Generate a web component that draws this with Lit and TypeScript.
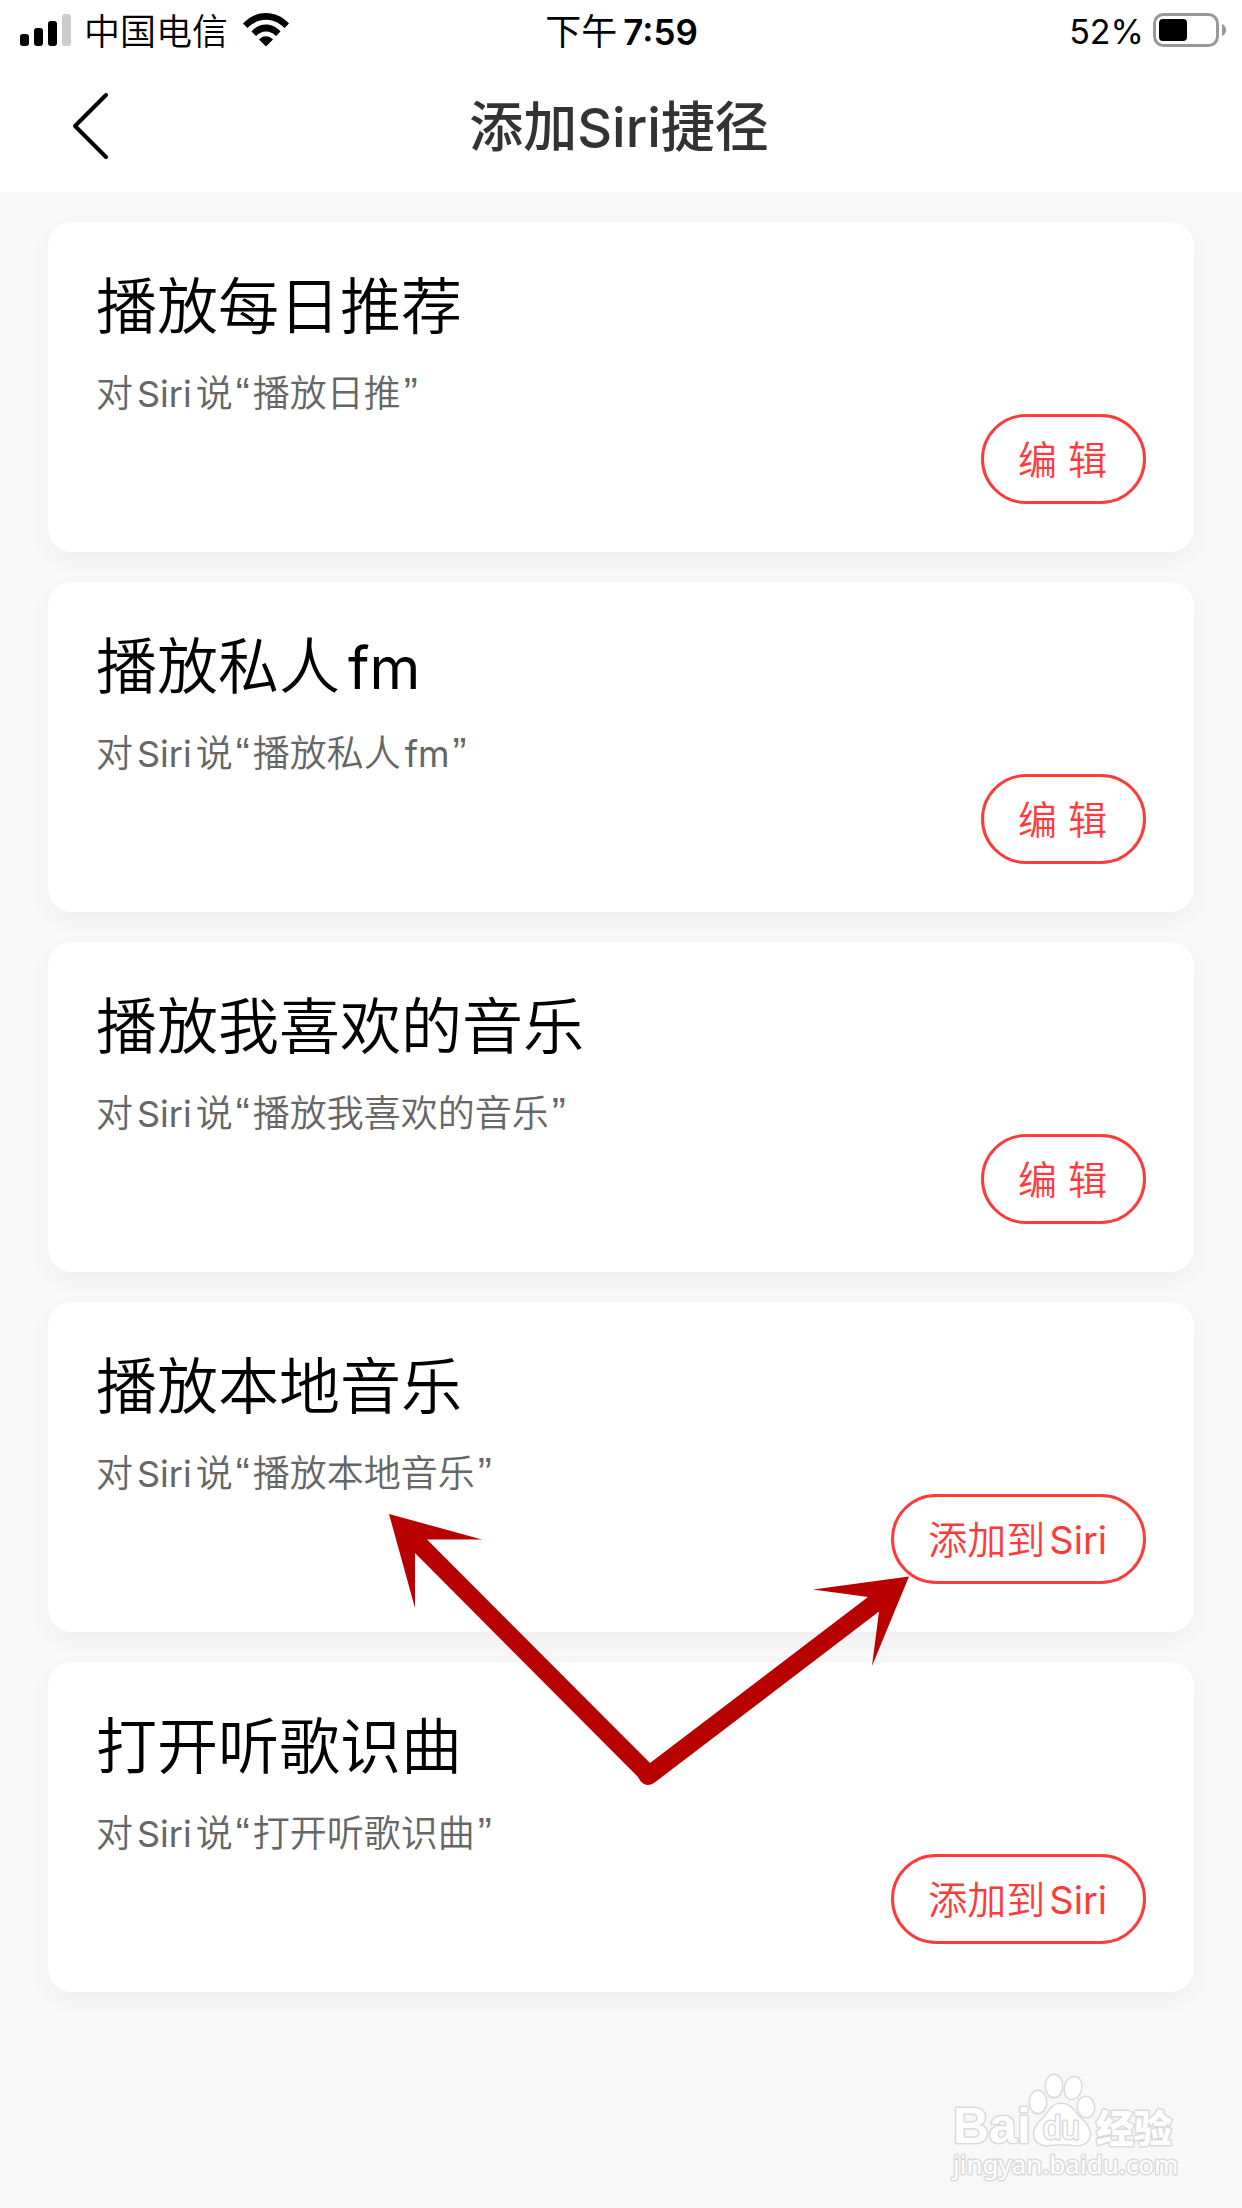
import { LitElement, html, css, svg } from "lit";
import { customElement, property } from "lit/decorators.js";
import { classMap } from "lit/directives/class-map.js";

interface Shortcut {
  title: string;
  phrase: string;
  added: boolean;
}

const SHORTCUTS: Shortcut[] = [
  { title: "播放每日推荐", phrase: "播放日推", added: true },
  { title: "播放私人fm", phrase: "播放私人fm", added: true },
  { title: "播放我喜欢的音乐", phrase: "播放我喜欢的音乐", added: true },
  { title: "播放本地音乐", phrase: "播放本地音乐", added: false },
  { title: "打开听歌识曲", phrase: "打开听歌识曲", added: false },
];

/**
 * Wraps Latin runs so that they get breathing room beside Chinese text,
 * and quotation marks so that they use a face with curly marks.
 */
const spaced = (text: string) => {
  const parts = text.split(/([A-Za-z]+|[“”])/).filter(Boolean);
  return parts.map((part, i) => {
    if (/^[“”]$/.test(part)) return html`<span class="quote">${part}</span>`;
    if (!/^[A-Za-z]/.test(part)) return part;
    const next = parts[i + 1];
    const open = next !== undefined && !/^[“”]$/.test(next);
    return html`<span class=${classMap({ latin: true, open })}>${part}</span>`;
  });
};

@customElement("status-bar")
export class StatusBar extends LitElement {
  static styles = css`
    :host {
      display: grid;
      grid-template-columns: 1fr auto 1fr;
      align-items: center;
      height: 60px;
      padding: 0 15px 0 20px;
      font-size: 36px;
      line-height: 56px;
      color: #000;
    }
    .group {
      display: flex;
      align-items: center;
    }
    span {
      padding-top: 3px;
    }
    .carrier {
      margin: 0 15px 0 12px;
      font-weight: 350;
    }
    .time {
      display: flex;
      gap: 6px;
      padding-right: 4px;
    }
    .clock {
      font-size: 35px;
      font-weight: 600;
    }
    .power {
      justify-content: flex-end;
      gap: 9px;
    }
    .level {
      font-size: 34px;
    }
    svg {
      display: block;
    }
  `;

  render() {
    return html`
      <div class="group">
        <svg width="52" height="32" viewBox="0 0 52 32" aria-hidden="true">
          <rect x="0" y="20" width="9" height="12" rx="3" />
          <rect x="14" y="14" width="9" height="18" rx="3" />
          <rect x="28" y="7" width="9" height="25" rx="3" />
          <rect x="42" y="0" width="9" height="32" rx="3" fill="#ccc" />
        </svg>
        <span class="carrier">中国电信</span>
        <svg width="46" height="34" viewBox="0 0 46 34" aria-hidden="true">
          <path d="M0 10.5C12.500 -3.500 33.500 -3.500 46 10.500L41.500 15C31 4 15 4 4.500 15Z" />
          <path d="M8.500 18.500C16.500 9.300 29.500 9.300 37.500 18.500L33 23C27.500 17 18.500 17 13 23Z" />
          <path d="M16 26.500C20 22 26 22 30 26.500L23 33.500Z" />
        </svg>
      </div>
      <div class="time"><span>下午</span><span class="clock">7:59</span></div>
      <div class="group power">
        <span class="level">52%</span>
        <svg width="74" height="34" viewBox="0 0 74 34" aria-hidden="true">
          <rect x="1.500" y="1.500" width="63" height="31" rx="9" fill="none" stroke="#999" stroke-width="3" />
          <rect x="6" y="6" width="28" height="22" rx="4" />
          <path d="M69 11C74.500 13 74.500 21 69 23Z" fill="#999" />
        </svg>
      </div>
    `;
  }
}

@customElement("shortcut-card")
export class ShortcutCard extends LitElement {
  @property({ attribute: false }) item!: Shortcut;

  static styles = css`
    :host {
      display: flex;
      flex-direction: column;
      padding: 50px 48px 48px;
      border-radius: 24px;
      background: #fff;
      box-shadow: 0 9px 24px rgba(0, 0, 0, 0.04);
      font-weight: 350;
    }
    .title {
      margin: 0;
      font-size: 61px;
      line-height: 70px;
      font-weight: 350;
      color: #000;
    }
    .hint {
      margin: 32px 0 0;
      font-size: 37px;
      line-height: 40px;
      color: #666;
    }
    .latin,
    .quote {
      line-height: 0;
    }
    .latin {
      margin-left: 4px;
      font-weight: 400;
    }
    .open {
      margin-right: 4px;
    }
    .title .latin {
      margin-left: 8px;
      font-size: 58px;
    }
    .hint .latin {
      font-size: 36px;
    }
    .quote {
      margin: 0 3px;
      font-family: "Liberation Sans", sans-serif;
      font-size: 42px;
    }
    .action {
      align-self: flex-end;
      height: 90px;
      padding: 2px 36px 0 34px;
      border: 3px solid #ff3a3a;
      border-radius: 45px;
      background: transparent;
      color: #ff3a3a;
      font: inherit;
      font-size: 39px;
      line-height: 82px;
      cursor: pointer;
    }
    .action .latin {
      font-size: 38px;
    }
  `;

  render() {
    const { title, phrase, added } = this.item;
    return html`
      <h2 class="title">${spaced(title)}</h2>
      <p class="hint">${spaced(`对Siri说“${phrase}”`)}</p>
      <button class="action" type="button">${added ? "编 辑" : spaced("添加到Siri")}</button>
    `;
  }
}

@customElement("app-root")
export class AppRoot extends LitElement {
  static styles = css`
    :host {
      display: flex;
      flex-direction: column;
      position: relative;
      box-sizing: border-box;
      min-height: 100vh;
      background: #f8f8f8;
      font-family: Inter, "Noto Sans CJK SC", sans-serif;
    }
    .top {
      background: #fff;
    }
    .nav {
      display: grid;
      grid-template-columns: 1fr auto 1fr;
      align-items: center;
      height: 132px;
      padding: 0 48px;
    }
    .back {
      justify-self: start;
      display: flex;
      padding: 16px 24px;
      border: 0;
      background: none;
      cursor: pointer;
    }
    .heading {
      margin: 0;
      padding: 4px 4px 0 0;
      font-size: 54px;
      line-height: 72px;
      font-weight: 500;
      color: #333;
    }
    .list {
      display: flex;
      flex-direction: column;
      gap: 30px;
      margin: 0;
      padding: 30px 48px;
      list-style: none;
    }
    .arrows {
      position: absolute;
      left: 389px;
      top: 1514px;
      pointer-events: none;
    }
    .watermark {
      align-self: flex-end;
      margin-top: auto;
      padding: 0 58px 15px 0;
    }
    .watermark svg {
      display: block;
    }
    .mark {
      fill: #fff;
      stroke: #dadada;
      stroke-width: 3px;
      stroke-linejoin: round;
      paint-order: stroke;
    }
    .latin-mark {
      font: 700 50px "Liberation Sans", sans-serif;
    }
    .du-mark {
      font: 400 33px "Liberation Sans", sans-serif;
    }
    .cjk-mark {
      font: 900 38px "Noto Sans CJK SC", sans-serif;
    }
    .url-mark {
      font: 400 26px "Noto Sans", sans-serif;
    }
  `;

  private arrows = svg`
    <path d="M0 0L93 25.500H38L261 249L479 83L424 75.500L520 62.500L483 152L490 97.500L265 269Q255 275 249 263L26 39V94Z" fill="#b90000" />
  `;

  render() {
    return html`
      <div class="top">
        <status-bar></status-bar>
        <header class="nav">
          <button class="back" type="button" aria-label="返回">
            <svg width="38" height="68" viewBox="0 0 38 68" fill="none" stroke="#000" stroke-width="4" stroke-linecap="round" stroke-linejoin="round">
              <path d="M34 3L3 34L34 65" />
            </svg>
          </button>
          <h1 class="heading">添加Siri捷径</h1>
        </header>
      </div>
      <ul class="list">
        ${SHORTCUTS.map((item) => html`<li><shortcut-card .item=${item}></shortcut-card></li>`)}
      </ul>
      <svg class="arrows" width="520" height="272" viewBox="0 0 520 272" aria-hidden="true">${this.arrows}</svg>
      <footer class="watermark">
        <svg width="240" height="125" viewBox="0 0 240 125">
          <text class="mark latin-mark" x="9" y="75">Bai</text>
          <g class="mark">
            <ellipse cx="94" cy="34" rx="8" ry="11" />
            <ellipse cx="110" cy="18" rx="8" ry="11" />
            <ellipse cx="129" cy="20" rx="8" ry="11" transform="rotate(14 129 20)" />
            <ellipse cx="142" cy="39" rx="8" ry="10" transform="rotate(-8 142 39)" />
            <path d="M117 36C127 36 130 44 137 51C145 58 148 66 144 72C138 80 128 76 118 76C107 76 98 80 92 72C88 64 92 57 99 51C106 44 107 36 117 36Z" />
          </g>
          <text class="mark du-mark" x="99" y="71">du</text>
          <text class="mark cjk-mark" x="152" y="74">经验</text>
          <text class="mark url-mark" x="9" y="106">jingyan.baidu.com</text>
        </svg>
      </footer>
    `;
  }
}
